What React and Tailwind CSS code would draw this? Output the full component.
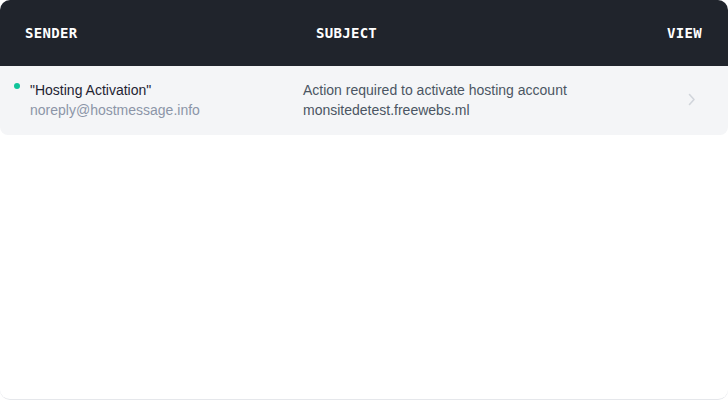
import React from 'react';

const messages = [
  {
    name: '"Hosting Activation"',
    email: 'noreply@hostmessage.info',
    subject: 'Action required to activate hosting account',
    detail: 'monsitedetest.freewebs.ml',
    unread: true,
  },
];

const App = () => {
  return (
    <div className="w-[728px] h-[400px] bg-white">
      <div className="h-[400px] bg-white rounded-[10px] border-b border-gray-200 overflow-hidden">
        <div className="h-[66px] bg-[#20242c] flex items-center pl-[25px] pr-[26px] text-white font-bold text-[14px] tracking-[0.3px] font-['DejaVu_Sans_Mono',monospace]">
          <div className="w-[291px]">SENDER</div>
          <div className="flex-1">SUBJECT</div>
          <div>VIEW</div>
        </div>
        {messages.map((m, i) => (
          <div
            key={i}
            className="h-[69px] bg-[#f4f5f7] rounded-b-lg flex items-start pt-[14px] pl-[14px] text-[14px] leading-5 font-['Liberation_Sans',Arial,sans-serif]"
          >
            <div className="w-[289px] flex items-start gap-[10px]">
              <span className={`mt-[3px] w-[6px] h-[6px] rounded-full ${m.unread ? 'bg-[#10c49a]' : 'bg-transparent'}`} />
              <div>
                <div className="text-[#1f2433]">{m.name}</div>
                <div className="text-[#8c95a8]">{m.email}</div>
              </div>
            </div>
            <div className="flex-1 text-[#4b5563]">
              <div>{m.subject}</div>
              <div>{m.detail}</div>
            </div>
            <div className="w-[40px] self-center flex items-center -mt-[16px]">
              <svg width="8" height="13" viewBox="0 0 8 13" fill="none">
                <path d="M1.5 1.5 L6 6.5 L1.5 11.5" stroke="#d1d5db" strokeWidth="1.6" strokeLinecap="round" strokeLinejoin="round" />
              </svg>
            </div>
          </div>
        ))}
      </div>
    </div>
  );
};

export default App;
